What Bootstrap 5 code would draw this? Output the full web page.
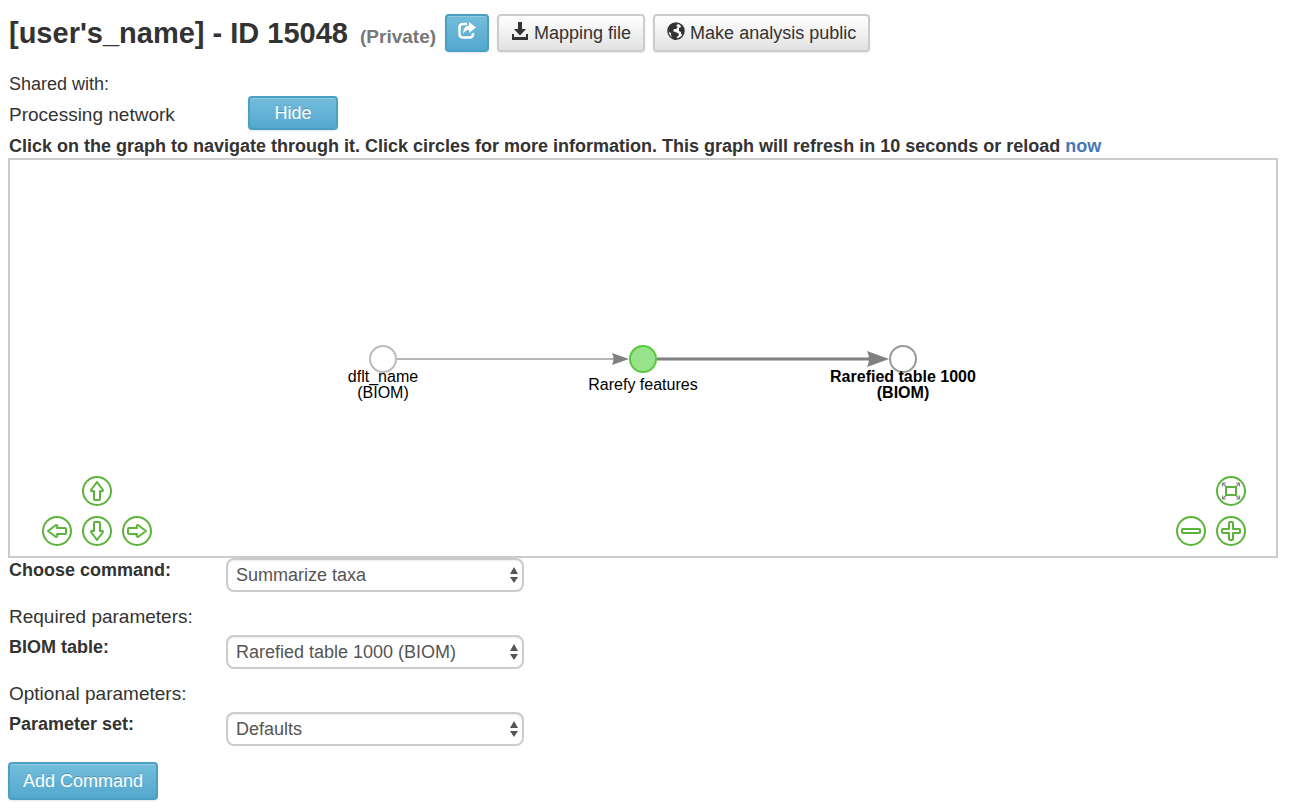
<!DOCTYPE html>
<html lang="en">
<head>
<meta charset="utf-8">
<meta name="viewport" content="width=device-width, initial-scale=1">
<title>Analysis 15048</title>
<link href="https://cdn.jsdelivr.net/npm/bootstrap@5.3.0/dist/css/bootstrap.min.css" rel="stylesheet">
<style>
  body { font-family: "Liberation Sans", Arial, sans-serif; font-size: 18px; line-height: 24px; color: #333; background: #fff; padding: 14px 16px 8px 8px; }
  .page-title { font-size: 29px; line-height: 36px; font-weight: 700; padding: 0 1px; }
  .page-title .status { font-size: 19px; line-height: 20px; color: #777; margin-left: 4px; }
  .btn { --bs-btn-font-size: 18px; --bs-btn-line-height: 24px; --bs-btn-border-width: 2px; --bs-btn-border-radius: 4px; --bs-btn-padding-x: 11px; --bs-btn-padding-y: 5px; box-shadow: inset 0 1px 0 rgba(255,255,255,.2), 0 1px 2px rgba(0,0,0,.1); }
  .btn-sky { --bs-btn-color: #fff; --bs-btn-hover-color: #fff; --bs-btn-active-color: #fff; --bs-btn-border-color: #4a9fc5; --bs-btn-hover-border-color: #3c87a9; background: linear-gradient(#74bddb, #54a8cf); text-shadow: 0 -1px 0 rgba(0,0,0,.2); }
  .btn-plain { --bs-btn-color: #333; --bs-btn-hover-color: #333; --bs-btn-border-color: #ccc; --bs-btn-hover-border-color: #aaa; --bs-btn-padding-x: 12px; background: linear-gradient(#fff, #e2e2e2); }
  .btn svg { display: inline-block; vertical-align: -1px; }
  .btn-hide { width: 90px; --bs-btn-padding-y: 3px; }
  .btn-add { --bs-btn-padding-x: 13px; }
  .text-line { padding-left: 1px; }
  .medium-line { font-size: 19px; }
  .field-label { width: 218px; flex: none; }
  .graph-label { width: 240px; flex: none; }
  .network { height: 400px; border: 2px solid #ccc; }
  .network text { font-family: "Liberation Sans", Arial, sans-serif; font-size: 16px; text-anchor: middle; fill: #000; }
  .nav-pad { display: grid; gap: 10px; grid-auto-rows: 30px; position: absolute; bottom: 10px; }
  .pan-pad { grid-template-columns: repeat(3, 30px); left: 32px; }
  .zoom-pad { grid-template-columns: repeat(2, 30px); right: 30px; }
  .nav-pad button { border: 0; background: none; padding: 0; width: 30px; height: 30px; }
  .nav-pad svg { display: block; fill: none; stroke: #5bb33b; stroke-width: 2; stroke-linejoin: round; }
  .form-select { width: 298px; height: 34px; border: 2px solid #ccc; border-radius: 8px; color: #555; font-size: 18px; line-height: 24px; padding: 3px 28px 3px 8px; box-shadow: inset 0 1px 2px rgba(0,0,0,.08);
    background-size: 10px 18px; background-position: right 3px center;
    background-image: url("data:image/svg+xml,%3Csvg xmlns='http://www.w3.org/2000/svg' viewBox='0 0 10 18'%3E%3Cpath d='M5 1l4 7H1zM1 11h8l-4 6z' fill='%23555'/%3E%3C/svg%3E"); }
  .section-line { margin: 13px 0 6px; }
  .now-link { color: #4678b2; text-decoration: none; }
</style>
</head>
<body>
<header class="d-flex flex-wrap align-items-center gap-2">
  <h1 class="page-title m-0">[user's_name] - ID 15048 <span class="status">(Private)</span></h1>
  <button class="btn btn-sky" type="button" aria-label="Share">
    <svg width="18" height="18" viewBox="0 0 18 18"><path d="M9 2H5Q1.500 2 1.500 5.500V12Q1.500 15.500 5 15.500H11.500Q15 15.500 15 12V11" fill="none" stroke="#fff" stroke-width="2.500"/><path d="M11 0l7 5.500-7 5.500V8Q7 8 5 12 5 4 11 3.500z" fill="#fff"/></svg>
  </button>
  <button class="btn btn-plain" type="button">
    <svg width="18" height="18" viewBox="0 0 18 18" fill="#333"><path d="M7 0h4v7h4L9 13.500 3 7h4zM1 12h2v3h12v-3h2v6H1z"/></svg>
    Mapping file
  </button>
  <button class="btn btn-plain" type="button">
    <svg width="18" height="18" viewBox="0 0 18 18"><circle cx="9" cy="9" r="8" fill="#fff" stroke="#333" stroke-width="1.500"/><path d="M1 8Q1 3 6 1.200L8 2l2-1 1 1-2 2 2 1-2 2-2 0-1 2 2 1 3 1 1 2-2 2-1 4Q5 17 4 13L4 11 2 10zM13 2l3 3 1 3-1 5-2-1 0-2-2-1 0-3 2-1z" fill="#333"/></svg>
    Make analysis public
  </button>
</header>

<main>
  <div class="text-line mt-3 pt-1">Shared with:</div>
  <div class="d-flex align-items-center">
    <div class="graph-label text-line medium-line pt-1">Processing network</div>
    <button class="btn btn-sky btn-hide" type="button">Hide</button>
  </div>
  <div class="text-line fw-bold pt-1">Click on the graph to navigate through it. Click circles for more information. This graph will refresh in 10 seconds or reload <a class="now-link" href="#">now</a></div>

  <section class="network position-relative d-flex justify-content-center align-items-center" aria-label="Processing network">
    <svg width="800" height="100" viewBox="-80 -11 800 100">
      <path d="M60 40H291" stroke="#b5b5b5" stroke-width="2"/>
      <path d="M320 40H560" stroke="#808080" stroke-width="3"/>
      <path d="M306 40L289 34Q292 40 289 46zM566 40L544 32Q548 40 544 48z" fill="#808080"/>
      <circle cx="60" cy="40" r="13" fill="#fff" stroke="#bbb" stroke-width="2"/>
      <circle cx="320" cy="40" r="13" fill="#97e28b" stroke="#5ac93d" stroke-width="2"/>
      <circle cx="580" cy="40" r="13" fill="#fff" stroke="#999" stroke-width="2"/>
      <text x="60" y="63">dflt_name</text><text x="60" y="79">(BIOM)</text>
      <text x="320" y="71">Rarefy features</text>
      <text x="580" y="63" font-weight="700">Rarefied table 1000</text><text x="580" y="79" font-weight="700">(BIOM)</text>
    </svg>
    <div class="nav-pad pan-pad">
      <span></span>
      <button type="button" aria-label="Move up"><svg width="30" height="30"><circle cx="15" cy="15" r="14"/><path d="M15 6L21 14Q21 16 18 15V23Q18 24 17 24H13Q12 24 12 23V15Q9 16 9 14z"/></svg></button>
      <span></span>
      <button type="button" aria-label="Move left"><svg width="30" height="30"><circle cx="15" cy="15" r="14"/><path d="M15 6L21 14Q21 16 18 15V23Q18 24 17 24H13Q12 24 12 23V15Q9 16 9 14z" transform="rotate(-90 15 15)"/></svg></button>
      <button type="button" aria-label="Move down"><svg width="30" height="30"><circle cx="15" cy="15" r="14"/><path d="M15 6L21 14Q21 16 18 15V23Q18 24 17 24H13Q12 24 12 23V15Q9 16 9 14z" transform="rotate(180 15 15)"/></svg></button>
      <button type="button" aria-label="Move right"><svg width="30" height="30"><circle cx="15" cy="15" r="14"/><path d="M15 6L21 14Q21 16 18 15V23Q18 24 17 24H13Q12 24 12 23V15Q9 16 9 14z" transform="rotate(90 15 15)"/></svg></button>
    </div>
    <div class="nav-pad zoom-pad">
      <span></span>
      <button type="button" aria-label="Fit graph"><svg width="30" height="30"><circle cx="15" cy="15" r="14"/><rect x="10" y="11" width="10" height="8"/><path d="M6.500 10.500V7H10M6.500 7l3.500 3.500M20 7h3.500v3.500M23.500 7L20 10.500M6.500 19.500V23H10M6.500 23l3.500-3.500M20 23h3.500v-3.500M23.500 23L20 19.500" stroke="#888" stroke-width="1.200"/></svg></button>
      <button type="button" aria-label="Zoom out"><svg width="30" height="30"><circle cx="15" cy="15" r="14"/><rect x="6" y="13" width="18" height="4" rx="1"/></svg></button>
      <button type="button" aria-label="Zoom in"><svg width="30" height="30"><circle cx="15" cy="15" r="14"/><path d="M13 7Q13 6 14 6H16Q17 6 17 7V13H23Q24 13 24 14V16Q24 17 23 17H17V23Q17 24 16 24H14Q13 24 13 23V17H7Q6 17 6 16V14Q6 13 7 13H13z"/></svg></button>
    </div>
  </section>

  <form>
    <div class="d-flex">
      <label class="field-label text-line fw-bold" for="command">Choose command:</label>
      <select class="form-select" id="command"><option>Summarize taxa</option></select>
    </div>
    <div class="section-line text-line medium-line">Required parameters:</div>
    <div class="d-flex">
      <label class="field-label text-line fw-bold" for="biom">BIOM table:</label>
      <select class="form-select" id="biom"><option>Rarefied table 1000 (BIOM)</option></select>
    </div>
    <div class="section-line text-line medium-line">Optional parameters:</div>
    <div class="d-flex">
      <label class="field-label text-line fw-bold" for="params">Parameter set:</label>
      <select class="form-select" id="params"><option>Defaults</option></select>
    </div>
    <button class="btn btn-sky btn-add mt-3" type="button">Add Command</button>
  </form>
</main>
<script src="https://cdn.jsdelivr.net/npm/bootstrap@5.3.0/dist/js/bootstrap.bundle.min.js"></script>
</body>
</html>
